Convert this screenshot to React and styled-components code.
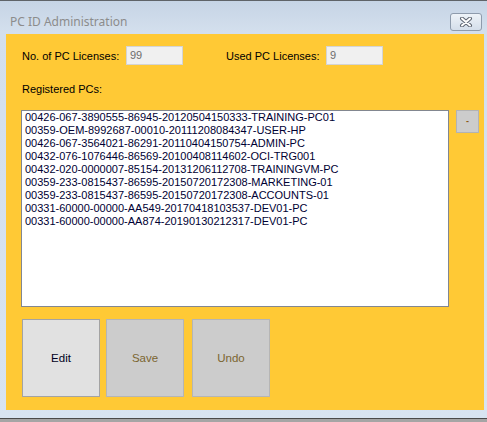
import React from 'react';
import styled, { createGlobalStyle } from 'styled-components';

const GlobalStyle = createGlobalStyle`
    html, body {
        margin: 0;
        padding: 0;
        background: #a5a5a5;
    }
    * {
        box-sizing: border-box;
    }
`

const Window = styled.div`
    width: 487px;
    height: 422px;
    display: flex;
    flex-direction: column;
    border-top: 1px solid #5f6368;
    background: linear-gradient(to bottom, #c6d4e5 0px, #d3dfed 30px, #d8e4f1 100%);
    overflow: hidden;
`

const TitleBar = styled.div`
    height: 33px;
    flex: none;
    display: flex;
    align-items: flex-start;
    justify-content: space-between;
    padding: 0 5px 0 10px;
`

const Title = styled.span`
    margin-top: 12px;
    font-family: "Noto Sans", sans-serif;
    font-size: 12px;
    line-height: 17px;
    color: #8c8c8c;
`

const CloseButton = styled.div`
    width: 32px;
    height: 18px;
    margin-top: 12px;
    border: 1px solid #8e9bac;
    border-radius: 3px;
    background: linear-gradient(to bottom, #eef3f8, #d4deea);
    display: flex;
    align-items: center;
    justify-content: center;
`

const Panel = styled.div`
    flex: none;
    height: 376px;
    margin: 0 3px 0 6px;
    background: #ffc935;
    padding: 12px 0 0 15px;
    display: flex;
    flex-direction: column;
    font-family: "Liberation Sans", Arial, sans-serif;
    font-size: 11px;
    color: #000;
`

const LicenseRow = styled.div`
    display: flex;
    align-items: center;
    height: 19px;
    padding-left: 1px;
`

const Field = styled.div`
    display: flex;
    align-items: center;
    margin-right: ${props => props.$gap || 0}px;
`

const Label = styled.span`
    width: ${props => props.$width}px;
    white-space: nowrap;
`

const ReadOnlyBox = styled.div`
    width: 57px;
    height: 19px;
    background: #f0f0f0;
    border: 1px solid #d4d4d4;
    color: #6d6d6d;
    padding: 2px 0 0 3px;
    line-height: 13px;
`

const SectionLabel = styled.div`
    margin-top: 18px;
    padding-left: 1px;
    height: 13px;
    line-height: 13px;
`

const ListRow = styled.div`
    display: flex;
    align-items: flex-start;
    gap: 7px;
    margin-top: 14px;
`

const ListBox = styled.div`
    width: 428px;
    height: 197px;
    background: #fff;
    border: 1px solid #828790;
    padding: 0 0 0 3px;
    color: #000033;
`

const ListItem = styled.div`
    height: 13px;
    line-height: 13px;
    white-space: nowrap;
`

const SmallButton = styled.div`
    width: 23px;
    height: 23px;
    background: #cccccc;
    border: 1px solid #b3b3b3;
    display: flex;
    align-items: center;
    justify-content: center;
    font-size: 9px;
    font-weight: bold;
    color: #8a5a1a;
    padding-bottom: 1px;
`

const ButtonRow = styled.div`
    display: flex;
    margin-top: 12px;
    padding-left: 1px;
`

const BigButton = styled.div`
    width: 78px;
    height: 78px;
    margin-right: ${props => props.$gap}px;
    background: ${props => props.$disabled ? '#cccccc' : '#e1e1e1'};
    border: 1px solid ${props => props.$disabled ? '#b5b5b5' : '#a3a3a3'};
    color: ${props => props.$disabled ? '#7b6530' : '#000022'};
    display: flex;
    align-items: center;
    justify-content: center;
    font-size: 11.5px;
`

const BottomEdge = styled.div`
    flex: none;
    margin-top: 8px;
    height: 4px;
    border-top: 1px solid #4a4a4a;
    background: #a5a5a5;
`

const pcs = [
    '00426-067-3890555-86945-20120504150333-TRAINING-PC01',
    '00359-OEM-8992687-00010-20111208084347-USER-HP',
    '00426-067-3564021-86291-20110404150754-ADMIN-PC',
    '00432-076-1076446-86569-20100408114602-OCI-TRG001',
    '00432-020-0000007-85154-20131206112708-TRAININGVM-PC',
    '00359-233-0815437-86595-20150720172308-MARKETING-01',
    '00359-233-0815437-86595-20150720172308-ACCOUNTS-01',
    '00331-60000-00000-AA549-20170418103537-DEV01-PC',
    '00331-60000-00000-AA874-20190130212317-DEV01-PC',
];

function CloseIcon() {
    return (
        <svg width="14" height="10" viewBox="0 0 14 10">
            <path d="M3 1.5 L11 8.5 M11 1.5 L3 8.5" stroke="#5d6470" strokeWidth="4" strokeLinecap="round" />
            <path d="M3 1.5 L11 8.5 M11 1.5 L3 8.5" stroke="#ffffff" strokeWidth="2" strokeLinecap="round" />
        </svg>
    );
}

export default function App() {
    return (
        <>
            <GlobalStyle />
            <Window>
                <TitleBar>
                    <Title>PC ID Administration</Title>
                    <CloseButton><CloseIcon /></CloseButton>
                </TitleBar>

                <Panel>
                    <LicenseRow>
                        <Field $gap={43}>
                            <Label $width={104}>No. of PC Licenses:</Label>
                            <ReadOnlyBox>99</ReadOnlyBox>
                        </Field>
                        <Field>
                            <Label $width={100}>Used PC Licenses:</Label>
                            <ReadOnlyBox>9</ReadOnlyBox>
                        </Field>
                    </LicenseRow>

                    <SectionLabel>Registered PCs:</SectionLabel>

                    <ListRow>
                        <ListBox>
                            {pcs.map(pc => <ListItem key={pc}>{pc}</ListItem>)}
                        </ListBox>
                        <SmallButton>-</SmallButton>
                    </ListRow>

                    <ButtonRow>
                        <BigButton $gap={6}>Edit</BigButton>
                        <BigButton $gap={8} $disabled>Save</BigButton>
                        <BigButton $gap={0} $disabled>Undo</BigButton>
                    </ButtonRow>
                </Panel>

                <BottomEdge />
            </Window>
        </>
    );
}
